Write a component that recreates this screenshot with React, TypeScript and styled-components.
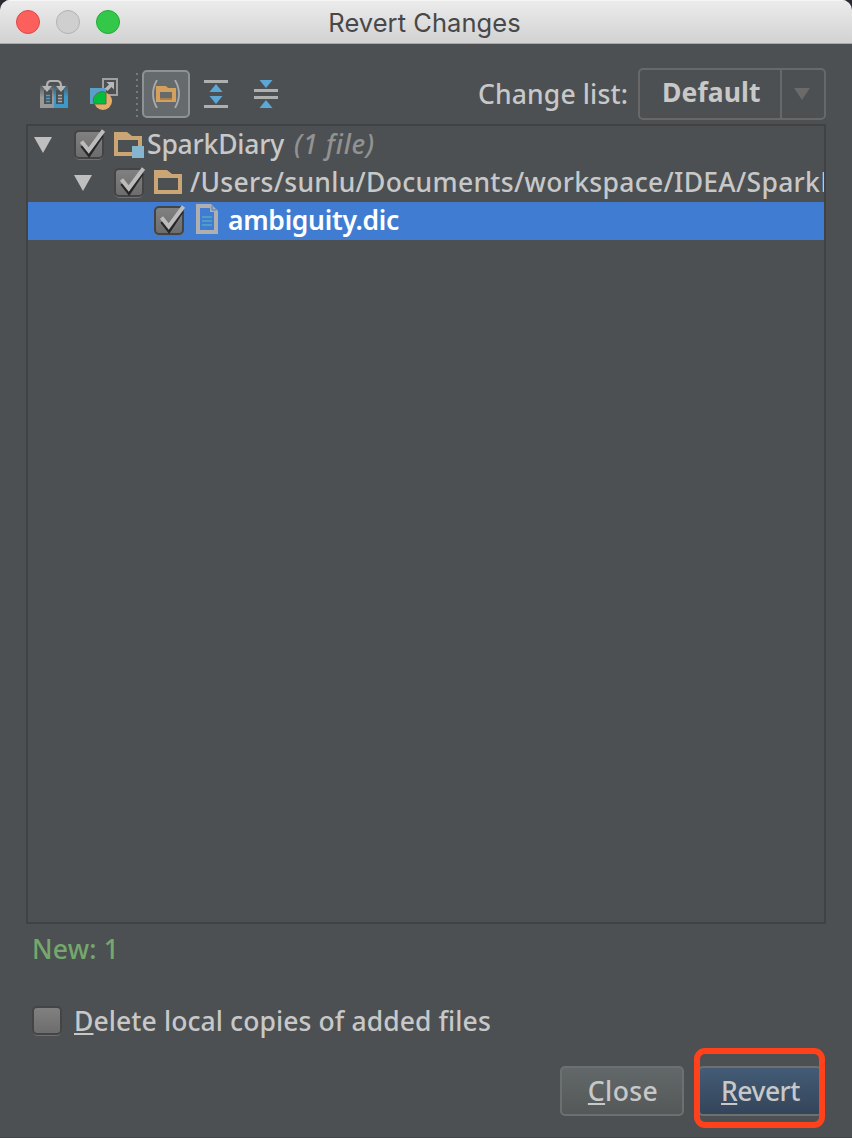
import React from "react";
import styled, { createGlobalStyle, css } from "styled-components";

const GlobalStyle = createGlobalStyle`
  * { box-sizing: border-box; }
  body { margin: 0; background: #2b2a33; }
`;

const Dialog = styled.div`
  width: 852px;
  height: 1138px;
  display: flex;
  flex-direction: column;
  overflow: hidden;
  background: #4c5052;
  color: #c8c8c8;
  font-family: "Noto Sans", "Open Sans", sans-serif;
  font-size: 26.5px;
  font-weight: 500;
  border-bottom: 1px solid #414446;
  border-radius: 10px 10px 0 0;
`;

const TitleBar = styled.header`
  display: grid;
  grid-template-columns: 152px 1fr 152px;
  align-items: center;
  height: 44px;
  flex: none;
  background: linear-gradient(#ececec, #d2d2d2);
  border-bottom: 1px solid #a9abab;
  box-shadow: inset 0 1px 0 #f6f6f6;
`;

const Lights = styled.div`
  display: flex;
  gap: 16px;
  padding-left: 16px;
`;

const Light = styled.span<{ $fill: string; $edge: string }>`
  width: 24px;
  height: 24px;
  border-radius: 50%;
  background: ${(p) => p.$fill};
  border: 1px solid ${(p) => p.$edge};
`;

const Title = styled.h1`
  margin: 2px 3px 0 0;
  text-align: center;
  font: 400 25.5px/40px Inter, sans-serif;
  letter-spacing: 0.05px;
  color: #484848;
`;

const Toolbar = styled.div`
  display: flex;
  align-items: center;
  height: 52px;
  margin: 24px 26px 4px 30px;
  flex: none;
`;

const ToolButton = styled.span<{ $active?: boolean }>`
  display: flex;
  align-items: center;
  justify-content: center;
  width: 48px;
  height: 48px;
  margin-right: 2px;
  border-radius: 5px;
  ${(p) =>
    p.$active &&
    css`
      background: #656b6d;
      border: 2px solid #8d9294;
    `}
`;

const Separator = styled.span`
  width: 2px;
  height: 46px;
  margin: 4px 4px 0 6px;
  background: repeating-linear-gradient(#77797a 0 2px, transparent 2px 6px);
`;

const Text = styled.span<{ $gap?: number }>`
  white-space: pre;
  letter-spacing: ${(p) => p.$gap ?? 0}px;
  line-height: 38px;
`;

const ComboLabel = styled(Text)`
  margin-left: auto;
  width: 160px;
`;

const Combo = styled.div`
  display: flex;
  width: 188px;
  height: 52px;
  border: 2px solid #686868;
  border-radius: 5px;
`;

const ComboValue = styled.div`
  width: 142px;
  padding: 3px 0 0 22px;
  border-right: 2px solid #686868;
  font-weight: 700;
`;

const ComboArrow = styled.div`
  flex: 1;
  display: flex;
  align-items: center;
  justify-content: center;
  padding-right: 2px;
`;

const Tree = styled.div`
  height: 800px;
  flex: none;
  margin: 0 26px;
  border: 2px solid #424242;
  overflow: hidden;
`;

const Row = styled.div<{ $level: number; $selected?: boolean }>`
  display: flex;
  align-items: center;
  height: 38px;
  padding-left: ${(p) => 6 + p.$level * 40}px;

  > ${Text} {
    padding-bottom: 2px;
  }

  ${(p) =>
    p.$selected &&
    css`
      background: #407dd2;
      color: #fff;
      font-weight: 600;
    `}
`;

const Disclosure = styled.span`
  display: flex;
  width: 40px;
  flex: none;
`;

const BoxSlot = styled.span`
  display: flex;
  width: 40px;
  height: 38px;
  flex: none;
`;

const IconSlot = styled.span<{ $width: number; $inset?: number }>`
  display: flex;
  flex: none;
  width: ${(p) => p.$width}px;
  padding-left: ${(p) => p.$inset ?? 0}px;
`;

const Count = styled(Text)`
  margin-left: 10px;
  color: #929292;
  font-style: italic;
`;

const Status = styled.div`
  height: 38px;
  margin: 6px 0 0 32px;
  flex: none;
  color: #74a86c;
`;

const Option = styled.label`
  display: flex;
  align-items: center;
  height: 38px;
  margin: 34px 0 0 32px;
  flex: none;
`;

const OptionBox = styled.span`
  display: flex;
  width: 42px;
`;

const Mnemonic = styled.span`
  text-decoration: underline;
  text-decoration-thickness: 2px;
  text-underline-offset: 2px;
  text-decoration-skip-ink: none;
`;

const Actions = styled.footer`
  display: flex;
  justify-content: flex-end;
  align-items: flex-start;
  margin: 8px 27px 0 0;
  height: 82px;
  flex: none;
`;

const Button = styled.button<{ $primary?: boolean }>`
  width: 124px;
  height: 50px;
  margin-top: 18px;
  padding: 0 0 0 2px;
  font: inherit;
  color: #c8c8c8;
  border: 2px solid #6c7071;
  border-radius: 5px;
  background: ${(p) => (p.$primary ? "linear-gradient(#435c75, #33455a)" : "linear-gradient(#626869, #545859)")};
`;

const Highlight = styled.div`
  display: flex;
  align-items: flex-start;
  justify-content: center;
  width: 131px;
  height: 80px;
  margin-left: 10px;
  border: 6px solid #ff411c;
  border-radius: 11px;
  overflow: hidden;

  ${Button} {
    flex: none;
    margin-top: 12px;
  }
`;

const Check = ({ on }: { on?: boolean }) => (
  <svg width="34" height="38" viewBox="0 0 34 38">
    <defs>
      <linearGradient id="boxFill" x1="0" y1="0" x2="0" y2="1">
        <stop offset="0" stopColor="#818181" />
        <stop offset="1" stopColor="#6c6c6c" />
      </linearGradient>
    </defs>
    <rect x="0.5" y="5.5" width="29" height="28.5" rx="5" fill="#707172" />
    <rect x="1" y="5" width="28" height="27" rx="4" fill="url(#boxFill)" stroke="#444" strokeWidth="2" />
    {on && (
      <>
        <path d="M8 19.5 15 28.5 28 9" fill="none" stroke="#272727" strokeWidth="4" />
        <path d="M7.5 15.5 14.7 24.5 29.500 4.500" fill="none" stroke="#bcbcbc" strokeWidth="4" />
      </>
    )}
  </svg>
);

const Arrow = () => (
  <svg width="18" height="16" viewBox="0 0 18 16">
    <path d="M0 0H18L9 16Z" fill="#bfbfbf" />
  </svg>
);

const Folder = ({ module }: { module?: boolean }) => (
  <svg width="30" height="26" viewBox="0 0 30 26">
    <path fillRule="evenodd" d="M0 0H13L18 4H28V24H0ZM4 8V20H24V8Z" fill="#c9a674" />
    {module && <path d="M18 14H30V26H18Z" fill="#86b5cf" />}
  </svg>
);

const FileIcon = () => (
  <svg width="22" height="34" viewBox="0 0 22 34">
    <path fillRule="evenodd" d="M0 0H15L22 7V30H0ZM4 4V26H18V8H14V4Z" fill="#afafaf" />
    <path d="M16 2V6H20" fill="none" stroke="#4b7fc5" strokeWidth="1" />
    <path d="M6 13H16M6 17H16M6 21H16" stroke="#4e9fc6" strokeWidth="2" />
  </svg>
);

const DiffIcon = () => (
  <svg width="28" height="28" viewBox="0 0 28 28">
    <defs>
      <linearGradient id="pageLeft" x1="0" y1="0" x2="0" y2="1">
        <stop offset="0" stopColor="#999" stopOpacity="0" />
        <stop offset="0.55" stopColor="#999" />
      </linearGradient>
      <linearGradient id="pageRight" x1="0" y1="0" x2="0" y2="1">
        <stop offset="0" stopColor="#3d9ac8" stopOpacity="0" />
        <stop offset="0.55" stopColor="#3d9ac8" />
      </linearGradient>
    </defs>
    <path d="M0 4H14V28H0Z" fill="url(#pageLeft)" />
    <path d="M14 4H28V28H14Z" fill="url(#pageRight)" />
    <path d="M4 10H12V24H4ZM16 10H24V24H16Z" fill="#4c5052" />
    <path d="M6 15.5H10M6 18.5H10M6 21.5H10" stroke="#4b9fca" strokeWidth="1.3" />
    <path d="M18 15.5H22M18 18.5H22M18 21.5H22" stroke="#aaa" strokeWidth="1.3" />
    <path d="M7 8V6Q7 1 11 1H17Q21 1 21 6V8" fill="none" stroke="#b0b0b0" strokeWidth="2.2" />
    <path d="M2 6H12L7 12ZM16 6H26L21 12Z" fill="#b5b5b5" />
  </svg>
);

const ShapesIcon = () => (
  <svg width="28" height="32" viewBox="0 0 28 32">
    <path d="M13 1H27V17H13Z" fill="#4c5052" stroke="#a0a0a0" strokeWidth="2" />
    <path d="M0 10H16V26H0Z" fill="#58a0c8" />
    <circle cx="13" cy="23" r="9" fill="#e5ae68" />
    <path d="M16 14.5A9 9 0 0 0 4 26H16Z" fill="#00bd3b" stroke="#606b55" strokeWidth="1" />
    <path d="M16.5 4H24V11.5L21.5 9 17.5 13 15 10.5 19 6.5Z" fill="#b8b8b8" />
  </svg>
);

const GroupIcon = () => (
  <svg width="28" height="28" viewBox="0 0 28 28">
    <path d="M5 0Q-3 14 5 28M23 0Q31 14 23 28" fill="none" stroke="#a8aaab" strokeWidth="1.8" />
    <path fillRule="evenodd" d="M4 6H14L16 8H24V22H4ZM8 12V18H20V12Z" fill="#d3a05e" />
    <path d="M8 19H20" stroke="#9b7444" strokeWidth="1.5" />
  </svg>
);

const ExpandIcon = () => (
  <svg width="24" height="28" viewBox="0 0 24 28">
    <path d="M0 1.5H24M0 26.5H24" stroke="#afafaf" strokeWidth="3" />
    <path d="M12 4 18.5 12H5.5ZM12 24 18.5 16H5.5Z" fill="#5ca7d4" />
  </svg>
);

const CollapseIcon = () => (
  <svg width="24" height="28" viewBox="0 0 24 28">
    <path d="M0 10.5H24M0 17.5H24" stroke="#afafaf" strokeWidth="3" />
    <path d="M12 8 18.5 0H5.5ZM12 20 18.5 28H5.5Z" fill="#5ca7d4" />
  </svg>
);

export default function App() {
  return (
    <>
      <GlobalStyle />
      <Dialog>
        <TitleBar>
          <Lights>
            <Light $fill="#fc605c" $edge="#df4744" />
            <Light $fill="#cfcfcf" $edge="#b2b2b2" />
            <Light $fill="#34c84a" $edge="#24a936" />
          </Lights>
          <Title>Revert Changes</Title>
        </TitleBar>
        <Toolbar>
          <ToolButton><DiffIcon /></ToolButton>
          <ToolButton><ShapesIcon /></ToolButton>
          <Separator />
          <ToolButton $active><GroupIcon /></ToolButton>
          <ToolButton><ExpandIcon /></ToolButton>
          <ToolButton><CollapseIcon /></ToolButton>
          <ComboLabel $gap={0.15}>Change list:</ComboLabel>
          <Combo>
            <ComboValue><Text $gap={0.1}>Default</Text></ComboValue>
            <ComboArrow>
              <svg width="16" height="12" viewBox="0 0 16 12">
                <path d="M0 0H16L8 12Z" fill="#6a6a6a" />
              </svg>
            </ComboArrow>
          </Combo>
        </Toolbar>
        <Tree>
          <Row $level={0}>
            <Disclosure><Arrow /></Disclosure>
            <BoxSlot><Check on /></BoxSlot>
            <IconSlot $width={33}><Folder module /></IconSlot>
            <Text $gap={-0.2}>SparkDiary</Text>
            <Count $gap={0.8}>(1 file)</Count>
          </Row>
          <Row $level={1}>
            <Disclosure><Arrow /></Disclosure>
            <BoxSlot><Check on /></BoxSlot>
            <IconSlot $width={36}><Folder /></IconSlot>
            <Text $gap={0.3}>/Users/sunlu/Documents/workspace/IDEA/SparkDiary</Text>
          </Row>
          <Row $level={3} $selected>
            <BoxSlot><Check on /></BoxSlot>
            <IconSlot $width={34} $inset={2}><FileIcon /></IconSlot>
            <Text $gap={-0.3}>ambiguity.dic</Text>
          </Row>
        </Tree>
        <Status><Text $gap={0.2}>New: 1</Text></Status>
        <Option>
          <OptionBox><Check /></OptionBox>
          <Text $gap={0.1}><Mnemonic>D</Mnemonic>elete local copies of added files</Text>
        </Option>
        <Actions>
          <Button><Text $gap={0.4}><Mnemonic>C</Mnemonic>lose</Text></Button>
          <Highlight>
            <Button $primary><Text $gap={-0.5}><Mnemonic>R</Mnemonic>evert</Text></Button>
          </Highlight>
        </Actions>
      </Dialog>
    </>
  );
}
